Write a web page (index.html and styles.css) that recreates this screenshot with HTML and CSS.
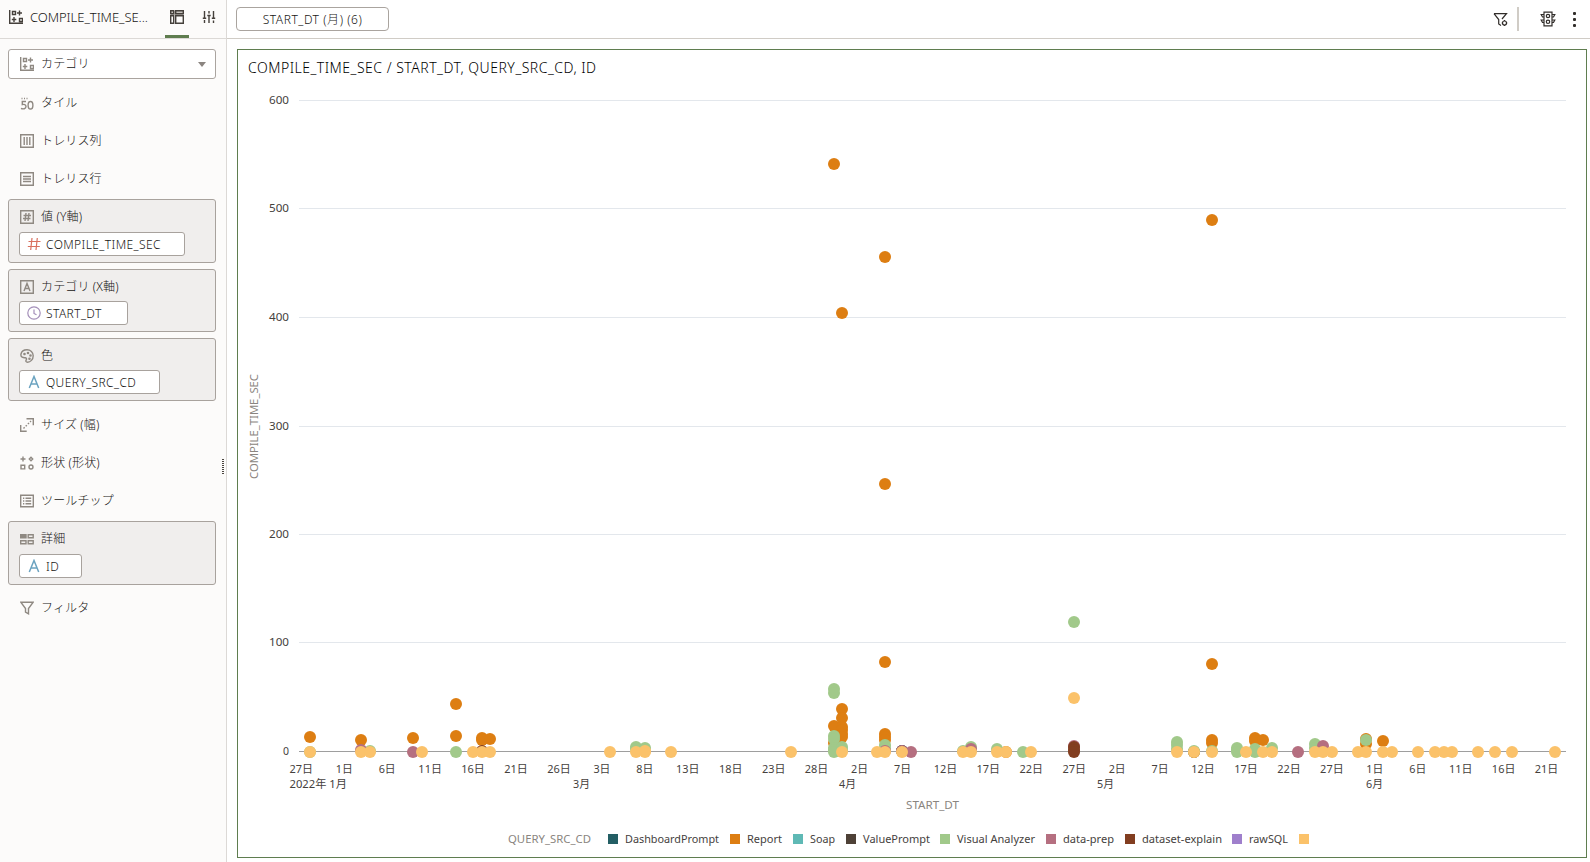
FILE: index.html
```html
<!DOCTYPE html>
<html lang="ja">

<head>
    <meta charset="UTF-8">
    <meta name="viewport" content="width=device-width, initial-scale=1.0">
    <title>COMPILE_TIME_SEC</title>
    <link rel="stylesheet" href="styles.css">
</head>

<body>
    <div class="app">
        <aside class="sidebar">
            <div class="side-head">
                <svg class="icon dark" viewBox="0 0 14 14"><path d="M.7 0v13.3H14M3.5 1.5h3v3h-3zM10.5 8.5h3v3h-3zM10.5 .5v5M8 3h5M5 7v5M2.8 9.5h4.5"/></svg>
                <span class="side-title">COMPILE_TIME_SE...</span>
                <div class="tab active">
                    <svg class="icon dark" viewBox="0 0 14 14"><path class="soft" d="M1 1h12v4H1z"/><path d="M.7 .7h3v3h-3zM5.7 .7h7.6v3H5.7zM.7 5.7h3v7.6h-3zM5.7 5.7h7.6v7.6H5.7z"/></svg>
                </div>
                <div class="tab">
                    <svg class="icon dark" viewBox="0 0 14 14"><path d="M2.5 1v7M2.5 10v3M7 1v2.5M7 6v7M11.5 1v7M11.5 10.5V13M.8 8.3h3.4M5.3 5.5h3.4M9.8 8.3h3.4"/></svg>
                </div>
            </div>

            <div class="select">
                <svg class="icon" viewBox="0 0 14 14"><path d="M.7 0v13.3H14M3.5 1.5h3v3h-3zM10.5 8.5h3v3h-3zM10.5 .5v5M8 3h5M5 7v5M2.8 9.5h4.5"/></svg>
                <span class="jp">カテゴリ</span>
                <i class="caret"></i>
            </div>

            <div class="row">
                <svg class="icon" viewBox="0 0 14 14"><path d="M1.5 2.5h1M4 2.5h1M6.5 2.5h1"/><path d="M6 5.5H2.3V8.6C4 8 6 8.5 6 10.5C6 12.8 3 13.5 1 12.3M10.5 5.5C8.7 5.5 8.1 7 8.1 9.2S8.7 13 10.5 13S12.9 11.5 12.9 9.2S12.3 5.5 10.5 5.5z"/></svg>
                <span class="jp">タイル</span>
            </div>
            <div class="row">
                <svg class="icon" viewBox="0 0 14 14"><path d="M.7 .7h12.6v12.6H.7zM4.2 3v8M7 3v8M9.8 3v8"/></svg>
                <span class="jp">トレリス列</span>
            </div>
            <div class="row">
                <svg class="icon" viewBox="0 0 14 14"><path d="M.7 .7h12.6v12.6H.7zM3 4.5h8M3 7h8M3 9.5h8"/></svg>
                <span class="jp">トレリス行</span>
            </div>

            <div class="box">
                <div class="box-label">
                    <svg class="icon" viewBox="0 0 14 14"><path d="M.7 .7h12.6v12.6H.7zM6 3 5 11M9 3 8 11M3.5 5.5h7.5M3 8.5h7.5"/></svg>
                    <span class="jp">値 (Y軸)</span>
                </div>
                <div class="chip chip-compile">
                    <svg class="chip-icon red" viewBox="0 0 14 14"><path d="M5 1 3.7 13M10.3 1 9 13M1.5 4.5h12M.8 9.5h12"/></svg>
                    <span>COMPILE_TIME_SEC</span>
                </div>
            </div>
            <div class="box">
                <div class="box-label">
                    <svg class="icon" viewBox="0 0 14 14"><path d="M.7 .7h12.6v12.6H.7zM4 11 7 3.5 10 11M5 8.5h4"/></svg>
                    <span class="jp">カテゴリ (X軸)</span>
                </div>
                <div class="chip chip-start">
                    <svg class="chip-icon purple" viewBox="0 0 14 14"><circle cx="7" cy="7" r="6.2"/><path d="M7 3.5V7.5L9.5 8.8"/></svg>
                    <span>START_DT</span>
                </div>
            </div>
            <div class="box">
                <div class="box-label">
                    <svg class="icon" viewBox="0 0 14 14"><path d="M1 5C1.5 2.5 4 .8 7 .8C10.5 .8 13.2 3.3 13.2 6.8C13.2 10.5 10.5 13.2 7.5 13.2C6 13.2 5.5 12 6.2 11C7 9.7 6.3 8.6 5 8.7C3.5 8.8 .3 8.5 1 5z"/><circle cx="4.5" cy="5" r=".6"/><circle cx="8" cy="4" r=".6"/><circle cx="10.5" cy="6.5" r=".6"/><circle cx="9.5" cy="9.7" r=".6"/></svg>
                    <span class="jp">色</span>
                </div>
                <div class="chip chip-query">
                    <svg class="chip-icon blue" viewBox="0 0 14 14"><path d="M2.3 13 7 1.5 11.7 13M3.7 9h6.6"/></svg>
                    <span>QUERY_SRC_CD</span>
                </div>
            </div>

            <div class="row">
                <svg class="icon" viewBox="0 0 14 14"><path d="M6.5 .7h6.8v6.5M.7 7v6.3h6"/><path stroke-dasharray="1.6 1.5" d="M3.5 10.5 11 3"/></svg>
                <span class="jp">サイズ (幅)</span>
            </div>
            <div class="row">
                <svg class="icon" viewBox="0 0 14 14"><path d="M3 .5v5M.5 3h5M1 9.2h3.7v3.7H1zM11 1.3 12.7 3 11 4.7 9.3 3z"/><circle cx="11" cy="11" r="2"/></svg>
                <span class="jp">形状 (形状)</span>
            </div>
            <div class="row">
                <svg class="icon" viewBox="0 0 14 14"><path d="M.7 1.2h12.6v11.6H.7zM3 4.2h1.3M3 7h1.3M3 9.8h1.3M5.5 4.2h5.7M5.5 7h5.7M5.5 9.8h5.7"/></svg>
                <span class="jp">ツールチップ</span>
            </div>

            <div class="box last">
                <div class="box-label">
                    <svg class="icon" viewBox="0 0 14 14"><path class="fill" d="M.7 2.7h5.3v3H.7z"/><path d="M8.2 2.7h5v3h-5zM.7 8.7h5.3v3H.7zM8.2 8.7h5v3h-5z"/></svg>
                    <span class="jp">詳細</span>
                </div>
                <div class="chip chip-id">
                    <svg class="chip-icon blue" viewBox="0 0 14 14"><path d="M2.3 13 7 1.5 11.7 13M3.7 9h6.6"/></svg>
                    <span>ID</span>
                </div>
            </div>

            <div class="row">
                <svg class="icon" viewBox="0 0 14 14"><path d="M.8 1.2h12.4L8.5 7.5v5.3L5.5 11V7.5z"/></svg>
                <span class="jp">フィルタ</span>
            </div>
            <i class="grip"></i>
        </aside>

        <main class="main">
            <header class="toolbar">
                <div class="filter-pill"><span>START_DT (月) (6)</span></div>
                <div class="tools">
                    <svg class="tool-filter" viewBox="0 0 15 15"><path d="M1 1.7h12.5L9 7M1 1.7 5.7 7.5V12L8 13.5"/><circle cx="11.5" cy="11" r="2"/><path d="M11.5 8v1M11.5 13v1M8.7 11h1M13.3 11h1"/></svg>
                    <i class="divider"></i>
                    <svg class="tool-light" viewBox="0 0 16 16"><path d="M4 1.2h8v13.6H4zM4 3.5H1.2L2.5 6H4M4 9H1.2L2.5 11.5H4M12 3.5h2.8L13.5 6H12M12 9h2.8L13.5 11.5H12"/><circle cx="8" cy="5" r="1.7"/><circle cx="8" cy="10.8" r="1.7"/></svg>
                    <div class="dots"><i></i><i></i><i></i></div>
                </div>
            </header>
            <section class="panel">
                <div class="chart-title">COMPILE_TIME_SEC / START_DT, QUERY_SRC_CD, ID</div>
                <svg class="chart" id="chart" width="1348" height="771" viewBox="238 86 1348 771"></svg>
            </section>
        </main>
    </div>
    <script src="chart.js"></script>
</body>

</html>
```
FILE: styles.css
```css
* {
    margin: 0;
    padding: 0;
    box-sizing: border-box;
}

body {
    width: 1590px;
    height: 862px;
    overflow: hidden;
    background: #fff;
    color: #161513;
    font-family: "Noto Sans", "Noto Sans CJK JP", sans-serif;
    font-size: 12px;
    font-weight: 300;
}

.app {
    display: flex;
    height: 862px;
}

/* 左パネル */
.sidebar {
    position: relative;
    width: 227px;
    flex: none;
    background: #fcfbfa;
    border-right: 1px solid #dcd9d6;
}

.side-head {
    display: flex;
    align-items: center;
    height: 39px;
    padding-left: 9px;
    margin-bottom: 10px;
    border-bottom: 1px solid #dcd9d6;
}

.side-head > .icon,
.side-title {
    margin-bottom: 4px;
}

.side-title {
    flex: none;
    width: 128px;
    margin-left: 7px;
    font-size: 13px;
    letter-spacing: -0.05px;
    white-space: nowrap;
}

.tab {
    display: flex;
    flex: none;
    justify-content: center;
    align-items: center;
    width: 24px;
    height: 38px;
    margin-left: 8px;
    padding-bottom: 4px;
}

.tab.active {
    margin-left: 7px;
    border-bottom: 3px solid #5f7d4f;
    padding-bottom: 1px;
}

.icon {
    width: 14px;
    height: 14px;
    flex: none;
    fill: none;
    stroke: #8f8982;
    stroke-width: 1.4;
}

.icon.dark {
    stroke: #45403b;
}

.icon .soft {
    fill: #c9c5c0;
    stroke: none;
}

.icon .fill {
    fill: #8f8982;
}

.jp {
    margin-left: 7px;
    line-height: 18px;
    letter-spacing: 0.15px;
    white-space: nowrap;
}

.select {
    display: flex;
    align-items: center;
    width: 208px;
    height: 30px;
    margin: 0 0 5px 8px;
    padding: 0 9px 0 11px;
    background: #fff;
    border: 1px solid #aaa49f;
    border-radius: 3px;
}

.caret {
    margin-left: auto;
    border: 4px solid transparent;
    border-top: 5px solid #8b8580;
    border-bottom: 0;
}

.row {
    display: flex;
    align-items: center;
    height: 38px;
    padding-left: 20px;
}

.box {
    width: 208px;
    height: 64px;
    margin: 1px 0 5px 8px;
    padding: 0 10px;
    background: #f0eeed;
    border: 1px solid #a8a29d;
    border-radius: 3px;
}

.box + .box {
    height: 63px;
    margin-top: 6px;
}

.box.last {
    margin-bottom: 4px;
}

.box-label {
    display: flex;
    align-items: center;
    height: 32px;
    padding: 2px 0 0 1px;
}

.box + .box .box-label {
    height: 31px;
}

.chip {
    display: flex;
    align-items: center;
    height: 24px;
    padding-left: 7px;
    background: #fff;
    border: 1px solid #a8a29d;
    border-radius: 3px;
    white-space: nowrap;
}

.chip span {
    margin-left: 5px;
    letter-spacing: 0.4px;
}

.chip-icon {
    width: 14px;
    height: 14px;
    fill: none;
    stroke-width: 1.2;
}

.red { stroke: #d9705f; }
.purple { stroke: #a48fb9; }
.blue { stroke: #6ba3c0; stroke-width: 1.5; }

.chip-compile { width: 166px; }
.chip-start { width: 109px; }
.chip-query { width: 141px; }
.chip-id { width: 63px; }

.grip {
    position: absolute;
    left: 222px;
    top: 459px;
    width: 2px;
    height: 15px;
    background: repeating-linear-gradient(#4a4540 0 1px, transparent 1px 2px);
}

/* 右側 */
.main {
    flex: 1;
}

.toolbar {
    display: flex;
    align-items: center;
    justify-content: space-between;
    height: 39px;
    padding: 0 14px 0 9px;
    border-bottom: 1px solid #d0ccc6;
}

.filter-pill {
    width: 153px;
    height: 24px;
    border: 1px solid #aaa49f;
    border-radius: 4px;
    line-height: 23px;
    text-align: center;
    letter-spacing: 0.55px;
}

.tools {
    display: flex;
    align-items: center;
}

.tools svg {
    fill: none;
    stroke: #312d2a;
    stroke-width: 1.2;
}

.tool-filter {
    width: 15px;
    height: 15px;
}

.divider {
    width: 2px;
    height: 24px;
    margin: 0 21px 0 9px;
    background: #d0ccc6;
}

.tool-light {
    width: 16px;
    height: 16px;
}

.dots {
    display: flex;
    flex-direction: column;
    gap: 3px;
    margin-left: 17px;
}

.dots i {
    width: 3px;
    height: 3px;
    border-radius: 1px;
    background: #312d2a;
}

.panel {
    width: 1350px;
    height: 809px;
    margin: 10px 0 0 10px;
    border: 1px solid #5f7d4f;
}

.chart-title {
    height: 36px;
    padding-left: 10px;
    line-height: 36px;
    font-size: 14px;
    letter-spacing: 0.5px;
    color: #000;
    white-space: nowrap;
}

/* チャート */
.chart {
    display: block;
}

.grid { stroke: #e3e7ec; }
.axis { stroke: #9e9e9e; }

.label {
    font-size: 11px;
    font-weight: 400;
    fill: #45413d;
}

.name {
    font-size: 11px;
    font-weight: 400;
    fill: #8a8580;
}
```
FILE: chart.js
```js
let chart = document.getElementById("chart");
const NS = "http://www.w3.org/2000/svg";
const X0 = 301.3, STEP = 8.588, Y0 = 752, UNIT = 1.085;

// [日付の位置, 値, ...]
const series = [
    ["DashboardPrompt", "#235e64", 608, 625, 94, [[104, 0.3], [70, 0.5]]],
    ["Report", "#dd7e12", 730, 747, 35, [[1, 14], [7, 11], [13, 13], [18, 44, 15], [21, 13, 11], [22, 12], [62, 542, 24, 8], [63, 405, 40, 31, 23, 20, 17, 14], [68, 456, 247, 83, 17, 14, 11], [82, 0.4], [104, 0.4], [106, 490, 81, 11, 8], [111, 13, 10], [112, 11], [124, 12, 7], [126, 10]]],
    ["Soap", "#5fb9b5", 793, 810, 25, []],
    ["ValuePrompt", "#4e4137", 846, 863, 67, [[70, 0.7]]],
    ["Visual Analyzer", "#a1c98a", 940, 957, 78, [[1, 0.4], [8, 1], [18, 0], [39, 5, 3], [40, 4], [62, 58, 54.5, 15, 12, 4, 2, 0], [63, 5, 2], [68, 6, 4], [77, 1], [78, 5], [81, 3], [84, 0], [90, 120], [102, 9, 6, 3], [104, 1], [106, 1], [109, 4, 2, 0], [111, 3, 0], [113, 4], [118, 7, 4], [124, 11]]],
    ["data-prep", "#b56f80", 1046, 1063, 51, [[7, 2], [13, 0], [68, 0.8], [70, 1], [71, 0], [78, 3], [90, 5.3], [116, 0], [119, 5.5, 3]]],
    ["dataset-explain", "#823e20", 1125, 1142, 80, [[21, 1], [90, 4.5, 2, 0]]],
    ["rawSQL", "#9f7fcc", 1232, 1249, 39, []],
    ["", "#fbc26a", 1299, 0, 0, [[40, 1], [90, 50]].concat([1, 7, 8, 14, 20, 21, 22, 36, 39, 40, 43, 57, 63, 67, 68, 70, 77, 78, 81, 82, 85, 102, 104, 106, 110, 112, 113, 118, 119, 120, 123, 124, 126, 127, 130, 132, 133, 134, 137, 139, 141, 146].map(i => [i, 0]))]
];

function draw(tag, attrs, text) {
    let el = document.createElementNS(NS, tag);
    for (let k in attrs) el.setAttribute(k, attrs[k]);
    if (text) el.textContent = text;
    chart.appendChild(el);
}

function label(text, x, y, width, cls) {
    draw("text", { x: x, y: y, textLength: width, lengthAdjust: "spacingAndGlyphs", class: cls || "label" }, text);
}

// 横線とY軸
[100, 208, 317, 426, 534, 642, 751].forEach((y, i) => {
    let value = 600 - i * 100;
    draw("line", { x1: 299, x2: 1566, y1: y + 0.5, y2: y + 0.5, class: value ? "grid" : "axis" });
    let w = value ? 20 : 6;
    label(String(value), 289 - w, y + 4, w);
});

// X軸
const days = [27, 1, 6, 11, 16, 21, 26, 3, 8, 13, 18, 23, 28, 2, 7, 12, 17, 22, 27, 2, 7, 12, 17, 22, 27, 1, 6, 11, 16, 21];
days.forEach((d, i) => {
    let w = d > 9 ? 23.5 : 17;
    label(d + "日", X0 + i * 5 * STEP - w / 2, 773, w);
});
label("2022年 1月", 289.5, 788, 57.5);
label("3月", 573, 788, 17);
label("4月", 839, 788, 17);
label("5月", 1097, 788, 17);
label("6月", 1366, 788, 17);

series.forEach(([name, color, sx, tx, tw, points]) => {
    points.forEach(([i, ...values]) => {
        values.forEach(v => draw("circle", { cx: Math.round(X0 + i * STEP), cy: Math.round(Y0 - v * UNIT), r: 6, fill: color }));
    });
    draw("rect", { x: sx, y: 834, width: 10, height: 10, fill: color });
    if (name) label(name, tx, 843, tw);
});

label("START_DT", 906, 809, 53, "name");
label("QUERY_SRC_CD", 508, 843, 83, "name");
draw("text", { transform: "translate(258 479) rotate(-90)", textLength: 105, lengthAdjust: "spacingAndGlyphs", class: "name" }, "COMPILE_TIME_SEC");
```
